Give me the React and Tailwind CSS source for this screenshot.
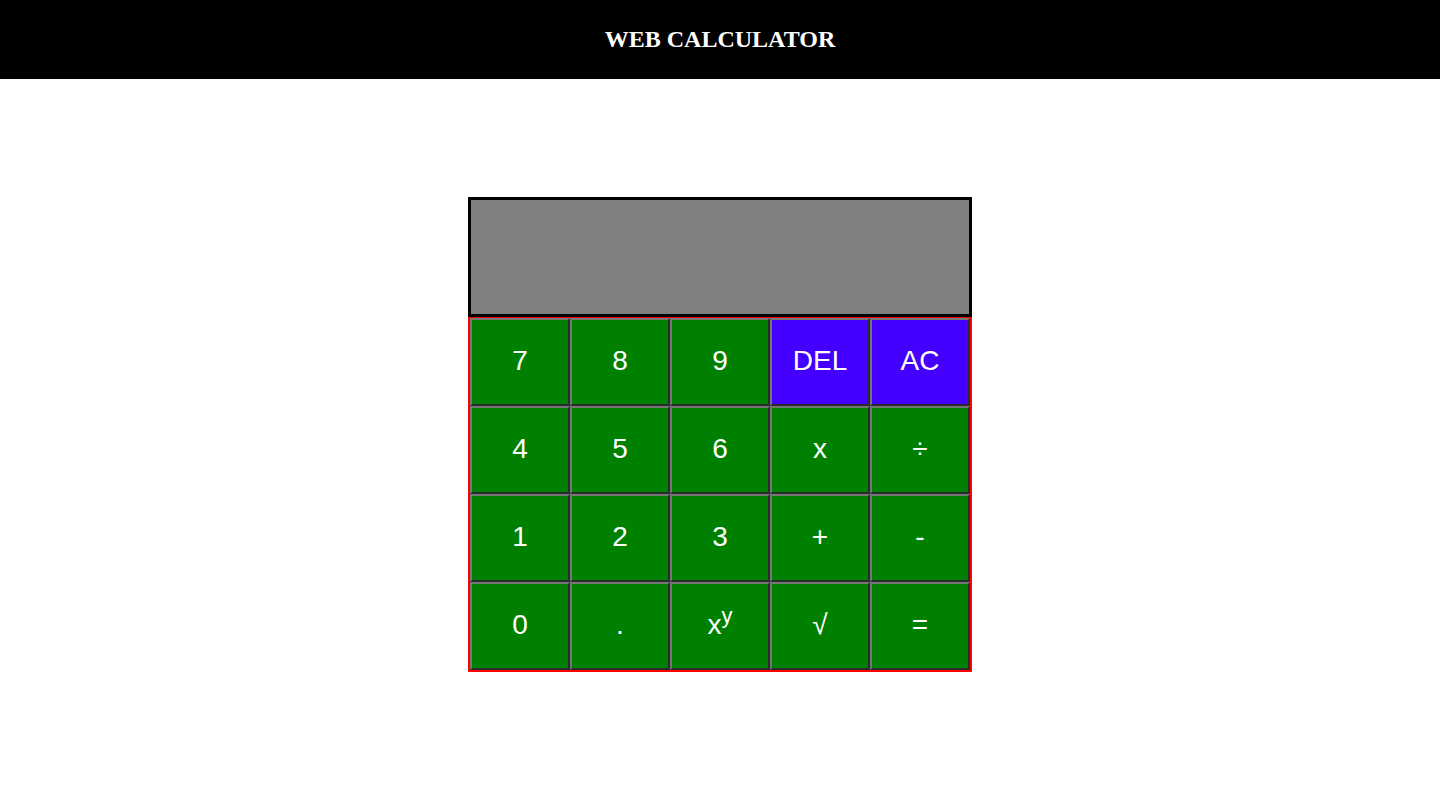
const keys = [
  { label: '7' }, { label: '8' }, { label: '9' }, { label: 'DEL', op: true }, { label: 'AC', op: true },
  { label: '4' }, { label: '5' }, { label: '6' }, { label: 'x' }, { label: '÷' },
  { label: '1' }, { label: '2' }, { label: '3' }, { label: '+' }, { label: '-' },
  { label: '0' }, { label: '.' }, { label: 'pow' }, { label: '√' }, { label: '=' },
];

export default function App() {
  return (
    <div className="min-h-screen bg-white">
      {/* Header */}
      <header className="bg-black h-[79px] flex items-center justify-center pb-[2px]">
        <h1 className="text-white font-bold text-[24px] font-['Liberation_Serif',serif]">WEB CALCULATOR</h1>
      </header>

      <div className="flex justify-center pt-[118px]">
        <div className="w-[504px]">
          {/* Display */}
          <div className="h-[120px] bg-[#808080] border-[3px] border-black"></div>

          {/* Keypad */}
          <div className="grid grid-cols-5 border-2 border-[#ff0000] border-t-[1px] font-['Liberation_Sans',Arial,sans-serif]">
            {keys.map((k, i) => (
              <button
                key={i}
                className={`h-[88px] pb-[2px] text-white text-[28px] border-2 border-t-[#767676] border-l-[#767676] border-b-[#2b2b2b] border-r-[#2b2b2b] ${k.op ? 'bg-[#4400ff]' : 'bg-[#008000]'}`}
              >
                {k.label === 'pow' ? (
                  <span>x<sup className="text-[22px]">y</sup></span>
                ) : (
                  k.label
                )}
              </button>
            ))}
          </div>
        </div>
      </div>
    </div>
  );
}
